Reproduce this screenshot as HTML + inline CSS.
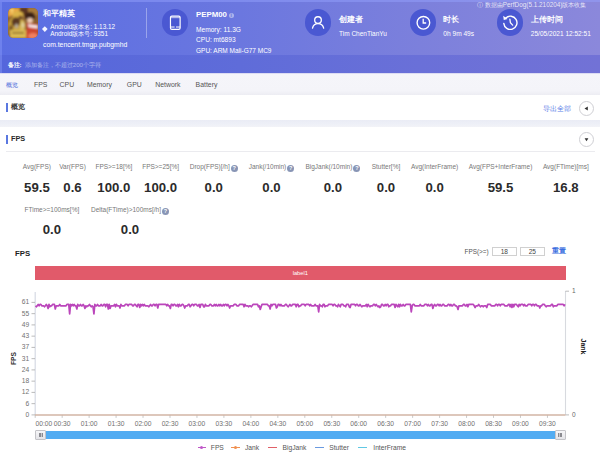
<!DOCTYPE html><html><head><meta charset="utf-8"><style>
html,body{margin:0;padding:0;width:600px;height:454px;overflow:hidden;background:#fff;font-family:"Liberation Sans", sans-serif;}
.t{position:absolute;white-space:nowrap;}
.a{position:absolute;}
</style></head><body>
<div class="a" style="left:0;top:0;width:600px;height:55px;background:linear-gradient(90deg,#5a6ee3 0%,#6b77df 40%,#7c80dc 70%,#8b88db 100%);"></div>
<div class="a" style="left:0;top:55px;width:600px;height:18px;background:linear-gradient(90deg,#5466dc 0%,#5f6cd9 40%,#6a70d8 70%,#7272d6 100%);"></div>
<div class="a" style="left:0;top:0;width:600px;height:1.5px;background:rgba(150,165,255,0.45);"></div>
<div class="a" style="left:0;top:1.5px;width:1.5px;height:71px;background:rgba(150,165,255,0.35);"></div>
<svg class="a" style="left:8px;top:7.7px" width="30" height="30" viewBox="0 0 30 30">
<defs><clipPath id="ic"><rect x="0" y="0" width="30" height="30" rx="5"/></clipPath><filter id="bl" x="-10%" y="-10%" width="120%" height="120%"><feGaussianBlur stdDeviation="0.8"/></filter></defs>
<g clip-path="url(#ic)"><rect x="0" y="0" width="30" height="30" fill="#8a6030"/>
<g filter="url(#bl)">
<rect x="10" y="0" width="12" height="8" fill="#5a3420"/>
<rect x="20" y="0" width="10" height="7" fill="#a87a3a"/>
<polygon points="0,0 12,0 10,6 0,9" fill="#e8a844"/>
<polygon points="2,0 6,0 4,7" fill="#f8d070"/>
<ellipse cx="10" cy="7" rx="5.5" ry="4" fill="#dcb448"/>
<ellipse cx="8" cy="19" rx="8" ry="11" fill="#c8a23c"/>
<ellipse cx="8" cy="14" rx="4.5" ry="4.5" fill="#5a3820"/>
<ellipse cx="8.5" cy="18" rx="1.6" ry="2.6" fill="#b8ad98"/>
<ellipse cx="14.5" cy="18" rx="2.8" ry="6" fill="#d8bc60"/>
<ellipse cx="15" cy="17" rx="1" ry="2.6" fill="#e0d4b0"/><ellipse cx="12.5" cy="9.5" rx="2" ry="2" fill="#6a4426"/>
<ellipse cx="3" cy="21" rx="2" ry="4" fill="#7a5628"/>
<rect x="2" y="22" width="16" height="8" fill="#dcbc52"/>
<rect x="4" y="24" width="12" height="1.6" fill="#8a6828"/>
<ellipse cx="22" cy="8.5" rx="5" ry="4.5" fill="#3a2016"/>
<ellipse cx="22" cy="12.5" rx="3" ry="2.8" fill="#ecc8b0"/>
<polygon points="18,15 30,16 30,22 19,21" fill="#c83428"/>
<polygon points="20,16 30,17.5 30,20.5 20.5,19.2" fill="#f4eaea"/>
<rect x="18" y="21" width="12" height="10" fill="#cc4a30"/>
<ellipse cx="25" cy="28" rx="5" ry="3" fill="#f08060"/>
</g></g></g></svg>
<div class="t" style="left:42.70px;top:8.70px;font-size:7.5px;line-height:9.00px;color:#fff;font-weight:700;">和平精英</div>
<div class="a" style="left:43.2px;top:27.2px;width:3.6px;height:3.6px;background:#f4f4ff;transform:rotate(45deg);"></div>
<div class="t" style="left:50.20px;top:22.56px;font-size:6.4px;line-height:7.68px;color:#fff;font-weight:400;">Android版本名: 1.13.12</div>
<div class="t" style="left:50.20px;top:30.06px;font-size:6.4px;line-height:7.68px;color:#fff;font-weight:400;">Android版本号: 9351</div>
<div class="t" style="left:43.00px;top:40.62px;font-size:6.8px;line-height:8.16px;color:#fff;font-weight:400;">com.tencent.tmgp.pubgmhd</div>
<div class="a" style="left:146px;top:7.5px;width:1px;height:30px;background:rgba(255,255,255,0.35);"></div>
<div class="a" style="left:161.70px;top:9.20px;width:26.60px;height:26.60px;border-radius:50%;background:#4a58d2;"><svg width="26.60" height="26.60" viewBox="0 0 27 27" style="position:absolute;left:0;top:0"><rect x="8.6" y="7.2" width="9.8" height="13.5" rx="1.4" fill="none" stroke="#fff" stroke-width="1.2"/><line x1="8.6" y1="8.8" x2="18.4" y2="8.8" stroke="#fff" stroke-width="0.7"/><line x1="8.6" y1="18.3" x2="12.8" y2="18.3" stroke="#fff" stroke-width="1"/><line x1="14.2" y1="18.3" x2="18.4" y2="18.3" stroke="#fff" stroke-width="1"/></svg></div>
<div class="t" style="left:196.00px;top:10.29px;font-size:7.85px;line-height:9.42px;color:#fff;font-weight:700;">PEPM00</div>
<div class="a" style="left:228.5px;top:12.8px;width:5.5px;height:5.5px;border-radius:50%;background:rgba(255,255,255,0.45);color:#6a74d8;font-size:5px;line-height:5.5px;text-align:center;font-weight:700">i</div>
<div class="t" style="left:196.00px;top:25.64px;font-size:6.6px;line-height:7.92px;color:#fff;font-weight:400;">Memory: 11.3G</div>
<div class="t" style="left:196.00px;top:36.44px;font-size:6.6px;line-height:7.92px;color:#fff;font-weight:400;">CPU: mt6893</div>
<div class="t" style="left:196.00px;top:47.10px;font-size:6.5px;line-height:7.80px;color:#fff;font-weight:400;">GPU: ARM Mali-G77 MC9</div>
<div class="a" style="left:304.90px;top:9.30px;width:26.40px;height:26.40px;border-radius:50%;background:#4a58d2;"><svg width="26.40" height="26.40" viewBox="0 0 27 27" style="position:absolute;left:0;top:0"><circle cx="13.3" cy="11.3" r="3.4" fill="none" stroke="#fff" stroke-width="1.35"/><path d="M7.7 19.5 C8.5 15.8 11 14.9 13.3 14.9 C15.7 14.9 18.2 15.8 19.1 19.5" fill="none" stroke="#fff" stroke-width="1.35" stroke-linecap="round"/></svg></div>
<div class="t" style="left:339.00px;top:15.24px;font-size:7.6px;line-height:9.12px;color:#fff;font-weight:700;">创建者</div>
<div class="t" style="left:339.00px;top:30.10px;font-size:6.5px;line-height:7.80px;color:#fff;font-weight:400;">Tim ChenTianYu</div>
<div class="a" style="left:409.50px;top:9.20px;width:26.60px;height:26.60px;border-radius:50%;background:#4a58d2;"><svg width="26.60" height="26.60" viewBox="0 0 27 27" style="position:absolute;left:0;top:0"><circle cx="13.6" cy="14.0" r="6.4" fill="none" stroke="#fff" stroke-width="1.4"/><path d="M13.4 10.0 V14.2 H16.4" fill="none" stroke="#fff" stroke-width="1.3"/></svg></div>
<div class="t" style="left:443.30px;top:15.24px;font-size:7.6px;line-height:9.12px;color:#fff;font-weight:700;">时长</div>
<div class="t" style="left:443.30px;top:30.04px;font-size:6.6px;line-height:7.92px;color:#fff;font-weight:400;">0h 9m 49s</div>
<div class="a" style="left:496.50px;top:9.20px;width:26.60px;height:26.60px;border-radius:50%;background:#4a58d2;"><svg width="26.60" height="26.60" viewBox="0 0 27 27" style="position:absolute;left:0;top:0"><path d="M6.9 14.6 A6.7 6.7 0 1 0 8.9 9.2" fill="none" stroke="#fff" stroke-width="1.4" stroke-linecap="round"/><polygon points="6.3,6.9 6.9,11.2 10.8,10.2" fill="#fff"/><path d="M13.1 10.4 L13.6 14.0 L15.9 16.4" fill="none" stroke="#fff" stroke-width="1.3" stroke-linecap="round"/></svg></div>
<div class="t" style="left:530.80px;top:15.24px;font-size:7.6px;line-height:9.12px;color:#fff;font-weight:700;">上传时间</div>
<div class="t" style="left:530.80px;top:30.07px;font-size:6.55px;line-height:7.86px;color:#fff;font-weight:400;">25/05/2021 12:52:51</div>
<div class="t" style="left:286.50px;width:300px;text-align:right;top:1.36px;font-size:6.4px;line-height:7.68px;color:rgba(255,255,255,0.82);font-weight:400;">&#9432; 数据由PerfDog(5.1.210204)版本收集</div>
<div class="t" style="left:7.50px;top:61.08px;font-size:6.2px;line-height:7.44px;color:#fff;font-weight:700;">备注:</div>
<div class="t" style="left:24.80px;top:61.14px;font-size:6.1px;line-height:7.32px;color:rgba(255,255,255,0.5);font-weight:400;">添加备注，不超过200个字符</div>
<div class="a" style="left:0;top:72.7px;width:600px;height:22.6px;background:linear-gradient(#f5f5fa 0%,#f4f4f9 80%,#ededf3 100%);"></div>
<div class="a" style="left:0;top:72.7px;width:600px;height:1.5px;background:#dcdcf3;"></div>
<div class="t" style="left:6.40px;top:81.18px;font-size:6.2px;line-height:7.44px;color:#3f62d8;font-weight:400;">概览</div>
<div class="t" style="left:34.00px;top:80.76px;font-size:6.9px;line-height:8.28px;color:#555;font-weight:400;">FPS</div>
<div class="t" style="left:59.60px;top:80.76px;font-size:6.9px;line-height:8.28px;color:#555;font-weight:400;">CPU</div>
<div class="t" style="left:87.00px;top:80.76px;font-size:6.9px;line-height:8.28px;color:#555;font-weight:400;">Memory</div>
<div class="t" style="left:126.80px;top:80.76px;font-size:6.9px;line-height:8.28px;color:#555;font-weight:400;">GPU</div>
<div class="t" style="left:155.20px;top:80.76px;font-size:6.9px;line-height:8.28px;color:#555;font-weight:400;">Network</div>
<div class="t" style="left:195.60px;top:80.76px;font-size:6.9px;line-height:8.28px;color:#555;font-weight:400;">Battery</div>
<div class="a" style="left:0;top:119.6px;width:600px;height:7.8px;background:linear-gradient(#eaecf5,#eef0f7 60%,#f2f3f8);"></div>
<div class="a" style="left:6px;top:103.2px;width:2px;height:8.7px;background:#5a78e0;"></div>
<div class="t" style="left:11.00px;top:103.24px;font-size:7.1px;line-height:8.52px;color:#3a3a3a;font-weight:700;">概览</div>
<div class="t" style="left:542.50px;top:104.50px;font-size:7px;line-height:8.40px;color:#5a7ee8;font-weight:400;">导出全部</div>
<div class="a" style="left:578.80px;top:100.50px;width:13px;height:13px;border-radius:50%;border:1px solid #cfcfd4;background:#fff;"><svg width="13" height="13" style="position:absolute;left:0;top:0"><path d="M4.5 6.5 L7.8 4.6 L7.8 8.4 Z" fill="#333"/></svg></div>
<div class="a" style="left:6px;top:135.3px;width:2px;height:8.3px;background:#5a78e0;"></div>
<div class="t" style="left:11.00px;top:135.02px;font-size:7.3px;line-height:8.76px;color:#2a2a2a;font-weight:700;">FPS</div>
<div class="a" style="left:578.80px;top:132.20px;width:13px;height:13px;border-radius:50%;border:1px solid #cfcfd4;background:#fff;"><svg width="13" height="13" style="position:absolute;left:0;top:0"><path d="M4.6 5.2 L8.4 5.2 L6.5 8.2 Z" fill="#333"/></svg></div>
<div class="a" style="left:6px;top:151px;width:589px;height:1px;background:#ebebef;"></div>
<div class="t" style="left:-63.12px;width:200px;text-align:center;top:163.40px;font-size:6.5px;line-height:7.80px;color:#777;font-weight:400;">Avg(FPS)</div>
<div class="t" style="left:-63.12px;width:200px;text-align:center;top:179.68px;font-size:13.2px;line-height:15.84px;color:#2b2b2b;font-weight:700;">59.5</div>
<div class="t" style="left:-27.50px;width:200px;text-align:center;top:163.40px;font-size:6.5px;line-height:7.80px;color:#777;font-weight:400;">Var(FPS)</div>
<div class="t" style="left:-27.50px;width:200px;text-align:center;top:179.68px;font-size:13.2px;line-height:15.84px;color:#2b2b2b;font-weight:700;">0.6</div>
<div class="t" style="left:13.88px;width:200px;text-align:center;top:163.40px;font-size:6.5px;line-height:7.80px;color:#777;font-weight:400;">FPS&gt;=18[%]</div>
<div class="t" style="left:13.88px;width:200px;text-align:center;top:179.68px;font-size:13.2px;line-height:15.84px;color:#2b2b2b;font-weight:700;">100.0</div>
<div class="t" style="left:60.62px;width:200px;text-align:center;top:163.40px;font-size:6.5px;line-height:7.80px;color:#777;font-weight:400;">FPS&gt;=25[%]</div>
<div class="t" style="left:60.62px;width:200px;text-align:center;top:179.68px;font-size:13.2px;line-height:15.84px;color:#2b2b2b;font-weight:700;">100.0</div>
<div class="t" style="left:113.75px;width:200px;text-align:center;top:163.40px;font-size:6.5px;line-height:7.80px;color:#777;font-weight:400;">Drop(FPS)[/h]<span style="display:inline-block;width:7px;height:7px;border-radius:50%;background:#8895b5;color:#fff;font-size:5.5px;line-height:7px;text-align:center;vertical-align:-1px;margin-left:1px;font-weight:700">?</span></div>
<div class="t" style="left:113.75px;width:200px;text-align:center;top:179.68px;font-size:13.2px;line-height:15.84px;color:#2b2b2b;font-weight:700;">0.0</div>
<div class="t" style="left:171.50px;width:200px;text-align:center;top:163.40px;font-size:6.5px;line-height:7.80px;color:#777;font-weight:400;">Jank(/10min)<span style="display:inline-block;width:7px;height:7px;border-radius:50%;background:#8895b5;color:#fff;font-size:5.5px;line-height:7px;text-align:center;vertical-align:-1px;margin-left:1px;font-weight:700">?</span></div>
<div class="t" style="left:171.50px;width:200px;text-align:center;top:179.68px;font-size:13.2px;line-height:15.84px;color:#2b2b2b;font-weight:700;">0.0</div>
<div class="t" style="left:232.90px;width:200px;text-align:center;top:163.40px;font-size:6.5px;line-height:7.80px;color:#777;font-weight:400;">BigJank(/10min)<span style="display:inline-block;width:7px;height:7px;border-radius:50%;background:#8895b5;color:#fff;font-size:5.5px;line-height:7px;text-align:center;vertical-align:-1px;margin-left:1px;font-weight:700">?</span></div>
<div class="t" style="left:232.90px;width:200px;text-align:center;top:179.68px;font-size:13.2px;line-height:15.84px;color:#2b2b2b;font-weight:700;">0.0</div>
<div class="t" style="left:286.00px;width:200px;text-align:center;top:163.40px;font-size:6.5px;line-height:7.80px;color:#777;font-weight:400;">Stutter[%]</div>
<div class="t" style="left:286.00px;width:200px;text-align:center;top:179.68px;font-size:13.2px;line-height:15.84px;color:#2b2b2b;font-weight:700;">0.0</div>
<div class="t" style="left:334.65px;width:200px;text-align:center;top:163.40px;font-size:6.5px;line-height:7.80px;color:#777;font-weight:400;">Avg(InterFrame)</div>
<div class="t" style="left:334.65px;width:200px;text-align:center;top:179.68px;font-size:13.2px;line-height:15.84px;color:#2b2b2b;font-weight:700;">0.0</div>
<div class="t" style="left:400.50px;width:200px;text-align:center;top:163.40px;font-size:6.5px;line-height:7.80px;color:#777;font-weight:400;">Avg(FPS+InterFrame)</div>
<div class="t" style="left:400.50px;width:200px;text-align:center;top:179.68px;font-size:13.2px;line-height:15.84px;color:#2b2b2b;font-weight:700;">59.5</div>
<div class="t" style="left:465.85px;width:200px;text-align:center;top:163.40px;font-size:6.5px;line-height:7.80px;color:#777;font-weight:400;">Avg(FTime)[ms]</div>
<div class="t" style="left:465.85px;width:200px;text-align:center;top:179.68px;font-size:13.2px;line-height:15.84px;color:#2b2b2b;font-weight:700;">16.8</div>
<div class="t" style="left:-48.12px;width:200px;text-align:center;top:205.90px;font-size:6.5px;line-height:7.80px;color:#777;font-weight:400;">FTime&gt;=100ms[%]</div>
<div class="t" style="left:-48.12px;width:200px;text-align:center;top:222.08px;font-size:13.2px;line-height:15.84px;color:#2b2b2b;font-weight:700;">0.0</div>
<div class="t" style="left:30.00px;width:200px;text-align:center;top:205.90px;font-size:6.5px;line-height:7.80px;color:#777;font-weight:400;">Delta(FTime)&gt;100ms[/h]<span style="display:inline-block;width:7px;height:7px;border-radius:50%;background:#8895b5;color:#fff;font-size:5.5px;line-height:7px;text-align:center;vertical-align:-1px;margin-left:1px;font-weight:700">?</span></div>
<div class="t" style="left:30.00px;width:200px;text-align:center;top:222.08px;font-size:13.2px;line-height:15.84px;color:#2b2b2b;font-weight:700;">0.0</div>
<div class="t" style="left:15.00px;top:248.92px;font-size:7.8px;line-height:9.36px;color:#1e1e1e;font-weight:700;">FPS</div>
<div class="t" style="left:464.50px;top:247.76px;font-size:6.4px;line-height:7.68px;color:#555;font-weight:400;">FPS(&gt;=)</div>
<div class="a" style="left:492px;top:247px;width:22.5px;height:7px;border:1px solid #d0d0d0;"></div>
<div class="a" style="left:520px;top:247px;width:22.5px;height:7px;border:1px solid #d0d0d0;"></div>
<div class="t" style="left:404.30px;width:200px;text-align:center;top:247.94px;font-size:6.6px;line-height:7.92px;color:#444;font-weight:400;">18</div>
<div class="t" style="left:432.30px;width:200px;text-align:center;top:247.94px;font-size:6.6px;line-height:7.92px;color:#444;font-weight:400;">25</div>
<div class="t" style="left:551.50px;top:247.46px;font-size:6.9px;line-height:8.28px;color:#3a6ee0;font-weight:700;">重置</div>
<div class="a" style="left:35px;top:265.7px;width:530.5px;height:14px;background:#e15a6a;"></div>
<div class="t" style="left:200.25px;width:200px;text-align:center;top:269.78px;font-size:5.7px;line-height:6.84px;color:#fff;font-weight:400;">label1</div>
<div class="t" style="left:-270.80px;width:300px;text-align:right;top:410.88px;font-size:6.7px;line-height:8.04px;color:#707070;font-weight:400;">0</div>
<div class="t" style="left:-270.80px;width:300px;text-align:right;top:399.63px;font-size:6.7px;line-height:8.04px;color:#707070;font-weight:400;">6</div>
<div class="t" style="left:-270.80px;width:300px;text-align:right;top:388.38px;font-size:6.7px;line-height:8.04px;color:#707070;font-weight:400;">12</div>
<div class="t" style="left:-270.80px;width:300px;text-align:right;top:377.13px;font-size:6.7px;line-height:8.04px;color:#707070;font-weight:400;">18</div>
<div class="t" style="left:-270.80px;width:300px;text-align:right;top:365.88px;font-size:6.7px;line-height:8.04px;color:#707070;font-weight:400;">24</div>
<div class="t" style="left:-270.80px;width:300px;text-align:right;top:354.63px;font-size:6.7px;line-height:8.04px;color:#707070;font-weight:400;">31</div>
<div class="t" style="left:-270.80px;width:300px;text-align:right;top:343.38px;font-size:6.7px;line-height:8.04px;color:#707070;font-weight:400;">37</div>
<div class="t" style="left:-270.80px;width:300px;text-align:right;top:332.13px;font-size:6.7px;line-height:8.04px;color:#707070;font-weight:400;">43</div>
<div class="t" style="left:-270.80px;width:300px;text-align:right;top:320.88px;font-size:6.7px;line-height:8.04px;color:#707070;font-weight:400;">49</div>
<div class="t" style="left:-270.80px;width:300px;text-align:right;top:309.63px;font-size:6.7px;line-height:8.04px;color:#707070;font-weight:400;">55</div>
<div class="t" style="left:-270.80px;width:300px;text-align:right;top:298.38px;font-size:6.7px;line-height:8.04px;color:#707070;font-weight:400;">61</div>
<div class="t" style="left:572.00px;top:287.00px;font-size:6.5px;line-height:7.80px;color:#666;font-weight:400;">1</div>
<div class="t" style="left:572.00px;top:410.60px;font-size:6.5px;line-height:7.80px;color:#666;font-weight:400;">0</div>
<div class="t" style="left:35.50px;top:419.98px;font-size:6.7px;line-height:8.04px;color:#6f6f6f;font-weight:400;">00:00</div>
<div class="t" style="left:-37.84px;width:200px;text-align:center;top:419.98px;font-size:6.7px;line-height:8.04px;color:#6f6f6f;font-weight:400;">00:30</div>
<div class="t" style="left:-10.88px;width:200px;text-align:center;top:419.98px;font-size:6.7px;line-height:8.04px;color:#6f6f6f;font-weight:400;">01:00</div>
<div class="t" style="left:16.08px;width:200px;text-align:center;top:419.98px;font-size:6.7px;line-height:8.04px;color:#6f6f6f;font-weight:400;">01:30</div>
<div class="t" style="left:43.04px;width:200px;text-align:center;top:419.98px;font-size:6.7px;line-height:8.04px;color:#6f6f6f;font-weight:400;">02:00</div>
<div class="t" style="left:70.00px;width:200px;text-align:center;top:419.98px;font-size:6.7px;line-height:8.04px;color:#6f6f6f;font-weight:400;">02:30</div>
<div class="t" style="left:96.96px;width:200px;text-align:center;top:419.98px;font-size:6.7px;line-height:8.04px;color:#6f6f6f;font-weight:400;">03:00</div>
<div class="t" style="left:123.92px;width:200px;text-align:center;top:419.98px;font-size:6.7px;line-height:8.04px;color:#6f6f6f;font-weight:400;">03:30</div>
<div class="t" style="left:150.88px;width:200px;text-align:center;top:419.98px;font-size:6.7px;line-height:8.04px;color:#6f6f6f;font-weight:400;">04:00</div>
<div class="t" style="left:177.84px;width:200px;text-align:center;top:419.98px;font-size:6.7px;line-height:8.04px;color:#6f6f6f;font-weight:400;">04:30</div>
<div class="t" style="left:204.80px;width:200px;text-align:center;top:419.98px;font-size:6.7px;line-height:8.04px;color:#6f6f6f;font-weight:400;">05:00</div>
<div class="t" style="left:231.76px;width:200px;text-align:center;top:419.98px;font-size:6.7px;line-height:8.04px;color:#6f6f6f;font-weight:400;">05:30</div>
<div class="t" style="left:258.72px;width:200px;text-align:center;top:419.98px;font-size:6.7px;line-height:8.04px;color:#6f6f6f;font-weight:400;">06:00</div>
<div class="t" style="left:285.68px;width:200px;text-align:center;top:419.98px;font-size:6.7px;line-height:8.04px;color:#6f6f6f;font-weight:400;">06:30</div>
<div class="t" style="left:312.64px;width:200px;text-align:center;top:419.98px;font-size:6.7px;line-height:8.04px;color:#6f6f6f;font-weight:400;">07:00</div>
<div class="t" style="left:339.60px;width:200px;text-align:center;top:419.98px;font-size:6.7px;line-height:8.04px;color:#6f6f6f;font-weight:400;">07:30</div>
<div class="t" style="left:366.56px;width:200px;text-align:center;top:419.98px;font-size:6.7px;line-height:8.04px;color:#6f6f6f;font-weight:400;">08:00</div>
<div class="t" style="left:393.52px;width:200px;text-align:center;top:419.98px;font-size:6.7px;line-height:8.04px;color:#6f6f6f;font-weight:400;">08:30</div>
<div class="t" style="left:420.48px;width:200px;text-align:center;top:419.98px;font-size:6.7px;line-height:8.04px;color:#6f6f6f;font-weight:400;">09:00</div>
<div class="t" style="left:447.44px;width:200px;text-align:center;top:419.98px;font-size:6.7px;line-height:8.04px;color:#6f6f6f;font-weight:400;">09:30</div>
<svg class="a" style="left:0;top:0" width="600" height="454" viewBox="0 0 600 454">
<line x1="35.2" y1="292" x2="35.2" y2="414.9" stroke="#d6dae4" stroke-width="1.2"/>
<line x1="565.5" y1="291" x2="565.5" y2="414.9" stroke="#d8dadf" stroke-width="1.1"/>
<line x1="31.5" y1="414.90" x2="35" y2="414.90" stroke="#aaa" stroke-width="0.8"/>
<line x1="31.5" y1="403.65" x2="35" y2="403.65" stroke="#aaa" stroke-width="0.8"/>
<line x1="31.5" y1="392.40" x2="35" y2="392.40" stroke="#aaa" stroke-width="0.8"/>
<line x1="31.5" y1="381.15" x2="35" y2="381.15" stroke="#aaa" stroke-width="0.8"/>
<line x1="31.5" y1="369.90" x2="35" y2="369.90" stroke="#aaa" stroke-width="0.8"/>
<line x1="31.5" y1="358.65" x2="35" y2="358.65" stroke="#aaa" stroke-width="0.8"/>
<line x1="31.5" y1="347.40" x2="35" y2="347.40" stroke="#aaa" stroke-width="0.8"/>
<line x1="31.5" y1="336.15" x2="35" y2="336.15" stroke="#aaa" stroke-width="0.8"/>
<line x1="31.5" y1="324.90" x2="35" y2="324.90" stroke="#aaa" stroke-width="0.8"/>
<line x1="31.5" y1="313.65" x2="35" y2="313.65" stroke="#aaa" stroke-width="0.8"/>
<line x1="31.5" y1="302.40" x2="35" y2="302.40" stroke="#aaa" stroke-width="0.8"/>
<line x1="565.5" y1="291.2" x2="569" y2="291.2" stroke="#aaa" stroke-width="0.8"/>
<line x1="565.5" y1="414.9" x2="569" y2="414.9" stroke="#aaa" stroke-width="0.8"/>
<line x1="35.20" y1="414.9" x2="35.20" y2="417.9" stroke="#bbb" stroke-width="0.8"/>
<line x1="62.16" y1="414.9" x2="62.16" y2="417.9" stroke="#bbb" stroke-width="0.8"/>
<line x1="89.12" y1="414.9" x2="89.12" y2="417.9" stroke="#bbb" stroke-width="0.8"/>
<line x1="116.08" y1="414.9" x2="116.08" y2="417.9" stroke="#bbb" stroke-width="0.8"/>
<line x1="143.04" y1="414.9" x2="143.04" y2="417.9" stroke="#bbb" stroke-width="0.8"/>
<line x1="170.00" y1="414.9" x2="170.00" y2="417.9" stroke="#bbb" stroke-width="0.8"/>
<line x1="196.96" y1="414.9" x2="196.96" y2="417.9" stroke="#bbb" stroke-width="0.8"/>
<line x1="223.92" y1="414.9" x2="223.92" y2="417.9" stroke="#bbb" stroke-width="0.8"/>
<line x1="250.88" y1="414.9" x2="250.88" y2="417.9" stroke="#bbb" stroke-width="0.8"/>
<line x1="277.84" y1="414.9" x2="277.84" y2="417.9" stroke="#bbb" stroke-width="0.8"/>
<line x1="304.80" y1="414.9" x2="304.80" y2="417.9" stroke="#bbb" stroke-width="0.8"/>
<line x1="331.76" y1="414.9" x2="331.76" y2="417.9" stroke="#bbb" stroke-width="0.8"/>
<line x1="358.72" y1="414.9" x2="358.72" y2="417.9" stroke="#bbb" stroke-width="0.8"/>
<line x1="385.68" y1="414.9" x2="385.68" y2="417.9" stroke="#bbb" stroke-width="0.8"/>
<line x1="412.64" y1="414.9" x2="412.64" y2="417.9" stroke="#bbb" stroke-width="0.8"/>
<line x1="439.60" y1="414.9" x2="439.60" y2="417.9" stroke="#bbb" stroke-width="0.8"/>
<line x1="466.56" y1="414.9" x2="466.56" y2="417.9" stroke="#bbb" stroke-width="0.8"/>
<line x1="493.52" y1="414.9" x2="493.52" y2="417.9" stroke="#bbb" stroke-width="0.8"/>
<line x1="520.48" y1="414.9" x2="520.48" y2="417.9" stroke="#bbb" stroke-width="0.8"/>
<line x1="547.44" y1="414.9" x2="547.44" y2="417.9" stroke="#bbb" stroke-width="0.8"/>
<line x1="35" y1="414.9" x2="565.5" y2="414.9" stroke="#d2b4a4" stroke-width="1.5"/>
<path d="M35.50 305.80 L36.40 306.80 L37.30 305.80 L38.20 304.40 L39.10 305.80 L39.99 304.40 L40.89 304.40 L41.79 305.80 L42.69 305.80 L43.59 305.80 L44.49 306.80 L45.39 305.80 L46.29 304.40 L47.19 305.80 L48.09 308.50 L48.98 304.40 L49.88 306.80 L50.78 305.80 L51.68 305.80 L52.58 304.40 L53.48 304.40 L54.38 304.40 L55.28 309.00 L56.18 305.80 L57.08 305.80 L57.97 305.80 L58.87 305.80 L59.77 304.40 L60.67 305.80 L61.57 305.80 L62.47 305.80 L63.37 305.80 L64.27 305.80 L65.17 305.80 L66.07 305.80 L66.96 304.40 L67.86 304.40 L68.76 304.40 L69.66 313.80 L70.56 304.40 L71.46 305.80 L72.36 304.40 L73.26 305.80 L74.16 304.40 L75.06 305.80 L75.95 305.80 L76.85 309.00 L77.75 304.40 L78.65 305.80 L79.55 305.80 L80.45 304.40 L81.35 305.80 L82.25 305.80 L83.15 304.40 L84.04 305.80 L84.94 308.50 L85.84 305.80 L86.74 306.80 L87.64 305.80 L88.54 305.80 L89.44 304.40 L90.34 305.80 L91.24 306.80 L92.14 305.80 L93.03 306.80 L93.93 313.80 L94.83 304.40 L95.73 305.80 L96.63 305.80 L97.53 304.40 L98.43 305.80 L99.33 305.80 L100.23 305.80 L101.13 304.40 L102.02 305.80 L102.92 305.80 L103.82 304.40 L104.72 304.40 L105.62 306.80 L106.52 304.40 L107.42 304.40 L108.32 309.00 L109.22 304.40 L110.12 308.50 L111.01 305.80 L111.91 305.80 L112.81 305.80 L113.71 305.80 L114.61 304.40 L115.51 306.80 L116.41 304.40 L117.31 305.80 L118.21 305.80 L119.11 305.80 L120.00 308.00 L120.90 304.40 L121.80 305.80 L122.70 305.80 L123.60 305.80 L124.50 305.80 L125.40 304.40 L126.30 304.40 L127.20 304.40 L128.10 305.80 L128.99 304.40 L129.89 304.40 L130.79 304.40 L131.69 304.40 L132.59 305.80 L133.49 305.80 L134.39 304.40 L135.29 304.40 L136.19 305.80 L137.08 306.80 L137.98 304.40 L138.88 304.40 L139.78 307.50 L140.68 304.40 L141.58 305.80 L142.48 304.40 L143.38 305.80 L144.28 304.40 L145.18 305.80 L146.07 305.80 L146.97 305.80 L147.87 305.80 L148.77 306.80 L149.67 305.80 L150.57 304.40 L151.47 305.80 L152.37 305.80 L153.27 304.40 L154.17 304.40 L155.06 305.80 L155.96 304.40 L156.86 304.40 L157.76 308.00 L158.66 304.40 L159.56 304.40 L160.46 304.40 L161.36 304.40 L162.26 304.40 L163.16 304.40 L164.05 304.40 L164.95 304.40 L165.85 304.40 L166.75 305.80 L167.65 304.40 L168.55 305.80 L169.45 305.80 L170.35 308.50 L171.25 304.40 L172.15 304.40 L173.04 305.80 L173.94 304.40 L174.84 304.40 L175.74 305.80 L176.64 305.80 L177.54 304.40 L178.44 306.80 L179.34 304.40 L180.24 305.80 L181.13 305.80 L182.03 304.40 L182.93 304.40 L183.83 305.80 L184.73 308.00 L185.63 305.80 L186.53 305.80 L187.43 305.80 L188.33 304.40 L189.23 304.40 L190.12 306.80 L191.02 305.80 L191.92 304.40 L192.82 304.40 L193.72 305.80 L194.62 304.40 L195.52 304.40 L196.42 304.40 L197.32 305.80 L198.22 305.80 L199.11 304.40 L200.01 307.50 L200.91 304.40 L201.81 304.40 L202.71 304.40 L203.61 306.80 L204.51 306.80 L205.41 304.40 L206.31 305.80 L207.21 305.80 L208.10 305.80 L209.00 305.80 L209.90 304.40 L210.80 304.40 L211.70 305.80 L212.60 305.80 L213.50 305.80 L214.40 304.40 L215.30 305.80 L216.20 304.40 L217.09 305.80 L217.99 305.80 L218.89 304.40 L219.79 305.80 L220.69 304.40 L221.59 305.80 L222.49 305.80 L223.39 304.40 L224.29 305.80 L225.19 304.40 L226.08 304.40 L226.98 305.80 L227.88 304.40 L228.78 305.80 L229.68 308.00 L230.58 305.80 L231.48 305.80 L232.38 305.80 L233.28 305.80 L234.17 304.40 L235.07 304.40 L235.97 304.40 L236.87 305.80 L237.77 305.80 L238.67 305.80 L239.57 304.40 L240.47 304.40 L241.37 304.40 L242.27 304.40 L243.16 304.40 L244.06 306.80 L244.96 304.40 L245.86 305.80 L246.76 305.80 L247.66 305.80 L248.56 306.80 L249.46 305.80 L250.36 305.80 L251.26 306.80 L252.15 305.80 L253.05 304.40 L253.95 304.40 L254.85 304.40 L255.75 304.40 L256.65 304.40 L257.55 304.40 L258.45 306.80 L259.35 305.80 L260.25 309.50 L261.14 306.80 L262.04 304.40 L262.94 304.40 L263.84 304.40 L264.74 304.40 L265.64 304.40 L266.54 304.40 L267.44 304.40 L268.34 305.80 L269.24 305.80 L270.13 309.00 L271.03 304.40 L271.93 305.80 L272.83 304.40 L273.73 304.40 L274.63 304.40 L275.53 304.40 L276.43 308.00 L277.33 306.80 L278.22 304.40 L279.12 304.40 L280.02 305.80 L280.92 304.40 L281.82 305.80 L282.72 305.80 L283.62 305.80 L284.52 305.80 L285.42 304.40 L286.32 304.40 L287.21 305.80 L288.11 306.80 L289.01 305.80 L289.91 304.40 L290.81 305.80 L291.71 305.80 L292.61 304.40 L293.51 304.40 L294.41 304.40 L295.31 304.40 L296.20 306.80 L297.10 304.40 L298.00 304.40 L298.90 306.80 L299.80 305.80 L300.70 305.80 L301.60 304.40 L302.50 304.40 L303.40 304.40 L304.30 304.40 L305.19 305.80 L306.09 304.40 L306.99 304.40 L307.89 304.40 L308.79 304.40 L309.69 305.80 L310.59 304.40 L311.49 305.80 L312.39 305.80 L313.29 305.80 L314.18 305.80 L315.08 304.40 L315.98 305.80 L316.88 305.80 L317.78 305.80 L318.68 312.00 L319.58 304.40 L320.48 305.80 L321.38 305.80 L322.28 306.80 L323.17 304.40 L324.07 304.40 L324.97 306.80 L325.87 305.80 L326.77 305.80 L327.67 305.80 L328.57 304.40 L329.47 304.40 L330.37 304.40 L331.26 304.40 L332.16 304.40 L333.06 305.80 L333.96 304.40 L334.86 304.40 L335.76 305.80 L336.66 305.80 L337.56 306.80 L338.46 304.40 L339.36 305.80 L340.25 306.80 L341.15 304.40 L342.05 304.40 L342.95 304.40 L343.85 305.80 L344.75 305.80 L345.65 306.80 L346.55 304.40 L347.45 304.40 L348.35 304.40 L349.24 306.80 L350.14 307.50 L351.04 304.40 L351.94 304.40 L352.84 304.40 L353.74 304.40 L354.64 304.40 L355.54 305.80 L356.44 304.40 L357.34 304.40 L358.23 305.80 L359.13 305.80 L360.03 304.40 L360.93 305.80 L361.83 306.80 L362.73 305.80 L363.63 305.80 L364.53 305.80 L365.43 305.80 L366.33 304.40 L367.22 306.80 L368.12 304.40 L369.02 305.80 L369.92 306.80 L370.82 305.80 L371.72 305.80 L372.62 305.80 L373.52 304.40 L374.42 304.40 L375.31 305.80 L376.21 304.40 L377.11 305.80 L378.01 306.80 L378.91 305.80 L379.81 307.50 L380.71 306.80 L381.61 304.40 L382.51 304.40 L383.41 305.80 L384.30 305.80 L385.20 304.40 L386.10 305.80 L387.00 304.40 L387.90 304.40 L388.80 306.80 L389.70 305.80 L390.60 305.80 L391.50 304.40 L392.40 304.40 L393.29 304.40 L394.19 304.40 L395.09 307.50 L395.99 304.40 L396.89 305.80 L397.79 306.80 L398.69 304.40 L399.59 306.80 L400.49 304.40 L401.39 305.80 L402.28 305.80 L403.18 304.40 L404.08 305.80 L404.98 305.80 L405.88 304.40 L406.78 304.40 L407.68 304.40 L408.58 304.40 L409.48 304.40 L410.38 304.40 L411.27 312.00 L412.17 305.80 L413.07 304.40 L413.97 304.40 L414.87 305.80 L415.77 305.80 L416.67 305.80 L417.57 305.80 L418.47 305.80 L419.37 305.80 L420.26 304.40 L421.16 305.80 L422.06 305.80 L422.96 305.80 L423.86 305.80 L424.76 304.40 L425.66 304.40 L426.56 304.40 L427.46 305.80 L428.35 304.40 L429.25 305.80 L430.15 305.80 L431.05 304.40 L431.95 304.40 L432.85 308.50 L433.75 305.80 L434.65 304.40 L435.55 305.80 L436.45 305.80 L437.34 304.40 L438.24 304.40 L439.14 305.80 L440.04 304.40 L440.94 305.80 L441.84 305.80 L442.74 304.40 L443.64 304.40 L444.54 305.80 L445.44 305.80 L446.33 305.80 L447.23 305.80 L448.13 304.40 L449.03 304.40 L449.93 305.80 L450.83 304.40 L451.73 305.80 L452.63 305.80 L453.53 304.40 L454.43 304.40 L455.32 305.80 L456.22 305.80 L457.12 306.80 L458.02 309.50 L458.92 305.80 L459.82 305.80 L460.72 305.80 L461.62 305.80 L462.52 305.80 L463.42 304.40 L464.31 304.40 L465.21 305.80 L466.11 305.80 L467.01 304.40 L467.91 306.80 L468.81 304.40 L469.71 304.40 L470.61 304.40 L471.51 304.40 L472.40 304.40 L473.30 304.40 L474.20 305.80 L475.10 307.50 L476.00 305.80 L476.90 305.80 L477.80 305.80 L478.70 304.40 L479.60 305.80 L480.50 306.80 L481.39 305.80 L482.29 305.80 L483.19 306.80 L484.09 305.80 L484.99 305.80 L485.89 305.80 L486.79 307.50 L487.69 304.40 L488.59 304.40 L489.49 304.40 L490.38 304.40 L491.28 305.80 L492.18 305.80 L493.08 305.80 L493.98 305.80 L494.88 305.80 L495.78 304.40 L496.68 304.40 L497.58 305.80 L498.48 304.40 L499.37 304.40 L500.27 305.80 L501.17 304.40 L502.07 304.40 L502.97 304.40 L503.87 304.40 L504.77 305.80 L505.67 305.80 L506.57 305.80 L507.47 305.80 L508.36 304.40 L509.26 304.40 L510.16 306.80 L511.06 304.40 L511.96 307.50 L512.86 304.40 L513.76 306.80 L514.66 304.40 L515.56 304.40 L516.46 304.40 L517.35 305.80 L518.25 306.80 L519.15 304.40 L520.05 305.80 L520.95 304.40 L521.85 304.40 L522.75 304.40 L523.65 305.80 L524.55 304.40 L525.44 305.80 L526.34 305.80 L527.24 305.80 L528.14 304.40 L529.04 304.40 L529.94 304.40 L530.84 304.40 L531.74 305.80 L532.64 304.40 L533.54 304.40 L534.43 305.80 L535.33 304.40 L536.23 304.40 L537.13 305.80 L538.03 305.80 L538.93 305.80 L539.83 308.00 L540.73 305.80 L541.63 305.80 L542.53 304.40 L543.42 304.40 L544.32 304.40 L545.22 305.80 L546.12 306.80 L547.02 305.80 L547.92 305.80 L548.82 305.80 L549.72 305.80 L550.62 305.80 L551.52 304.40 L552.41 304.40 L553.31 306.80 L554.21 305.80 L555.11 305.80 L556.01 305.80 L556.91 305.80 L557.81 304.40 L558.71 304.40 L559.61 304.40 L560.51 304.40 L561.40 304.40 L562.30 304.40 L563.20 304.40 L564.10 305.80 L565.00 304.40" fill="none" stroke="#bb46bb" stroke-width="1.7" stroke-linejoin="round"/>
</svg>
<div class="t" style="left:-1.8000000000000007px;top:354.3px;width:30px;height:9px;line-height:9px;text-align:center;font-size:6.6px;font-weight:700;color:#333;transform:rotate(-90deg)">FPS</div>
<div class="t" style="left:567.5px;top:342.1px;width:30px;height:9px;line-height:9px;text-align:center;font-size:7px;font-weight:700;color:#222;transform:rotate(90deg)">Jank</div>
<div class="a" style="left:45.5px;top:431px;width:509.5px;height:7.5px;background:#52acf2;"></div>
<div class="a" style="left:35px;top:429.7px;width:9.2px;height:8.6px;border:1px solid #c4c4c8;background:linear-gradient(#f6f6f8,#e4e4e8);border-radius:1px;"><div class="a" style="left:2.6px;top:2.5px;width:4.2px;height:3.8px;background:repeating-linear-gradient(90deg,#8a8a90 0 1px,#c8c8cc 1px 1.5px)"></div></div>
<div class="a" style="left:554.5px;top:429.7px;width:9.2px;height:8.6px;border:1px solid #c4c4c8;background:linear-gradient(#f6f6f8,#e4e4e8);border-radius:1px;"><div class="a" style="left:2.6px;top:2.5px;width:4.2px;height:3.8px;background:repeating-linear-gradient(90deg,#8a8a90 0 1px,#c8c8cc 1px 1.5px)"></div></div>
<div class="a" style="left:197.5px;top:446.9px;width:8.30px;height:1.6px;background:#c058c8;"></div>
<div class="a" style="left:200.05px;top:446.1px;width:3.2px;height:3.2px;border-radius:50%;background:#c058c8;"></div>
<div class="t" style="left:210.80px;top:443.98px;font-size:6.7px;line-height:8.04px;color:#555;font-weight:400;">FPS</div>
<div class="a" style="left:231.3px;top:446.9px;width:8.70px;height:1.6px;background:#f09050;"></div>
<div class="a" style="left:234.05px;top:446.1px;width:3.2px;height:3.2px;border-radius:50%;background:#f09050;"></div>
<div class="t" style="left:245.00px;top:443.98px;font-size:6.7px;line-height:8.04px;color:#555;font-weight:400;">Jank</div>
<div class="a" style="left:268.3px;top:446.9px;width:9.20px;height:1.6px;background:#e06068;"></div>
<div class="t" style="left:282.50px;top:443.98px;font-size:6.7px;line-height:8.04px;color:#555;font-weight:400;">BigJank</div>
<div class="a" style="left:315px;top:446.9px;width:9.20px;height:1.6px;background:#6a9ae0;"></div>
<div class="t" style="left:329.20px;top:443.98px;font-size:6.7px;line-height:8.04px;color:#555;font-weight:400;">Stutter</div>
<div class="a" style="left:358.3px;top:446.9px;width:9.20px;height:1.6px;background:#60c8e4;"></div>
<div class="t" style="left:373.30px;top:443.98px;font-size:6.7px;line-height:8.04px;color:#555;font-weight:400;">InterFrame</div>
</body></html>
